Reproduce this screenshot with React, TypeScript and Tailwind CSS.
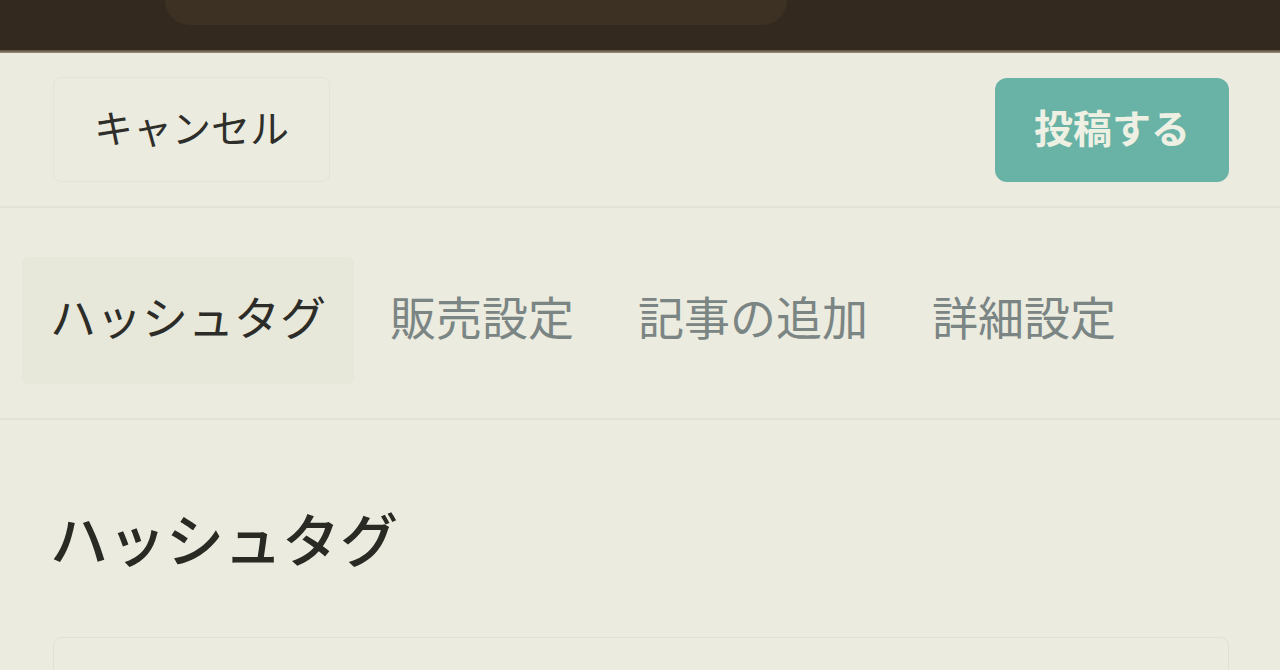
import React from "react";

const font = { fontFamily: '"Noto Sans CJK JP", "Noto Sans", sans-serif' };

export default function App() {
  const tabs = ["ハッシュタグ", "販売設定", "記事の追加", "詳細設定"];
  return (
    <div className="w-[1280px] h-[670px] overflow-hidden bg-[#ebebdf] flex flex-col" style={font}>
      {/* top system bar */}
      <div className="h-[50px] bg-[#34291e] flex shrink-0">
        <div className="ml-[165px] w-[622px] h-[25px] bg-[#3d3124] rounded-b-[28px]" />
      </div>
      <div className="h-[3px] bg-gradient-to-b from-[#5a4a38] to-[#9c9282] shrink-0" />

      {/* header */}
      <div className="h-[155px] shrink-0 flex items-center justify-between pl-[53px] pr-[51px] border-b-2 border-[#e2e2d5]">
        <button className="h-[105px] w-[277px] rounded-lg border border-[#e4e4d8] text-[39px] text-[#2e2e2a] leading-none flex items-center justify-center pb-[7px]">
          キャンセル
        </button>
        <button className="h-[104px] w-[234px] rounded-xl bg-[#68b3a5] text-[39px] font-bold text-[#eef0e3] leading-none flex items-center justify-center pb-[6px]">
          投稿する
        </button>
      </div>

      {/* tabs */}
      <div className="h-[212px] shrink-0 flex items-center pl-[22px] gap-2 border-b-2 border-[#e2e2d5]">
        {tabs.map((t, i) => (
          <div
            key={t}
            className={
              i === 0
                ? "h-[127px] px-7 flex items-center bg-[#e7e7da] rounded-md text-[46px] text-[#2c2c28] leading-none mt-[14px] pb-[10px]"
                : "h-[127px] px-7 flex items-center text-[46px] text-[#7a8584] leading-none mt-[14px] pb-[10px]"
            }
          >
            {t}
          </div>
        ))}
      </div>

      {/* content */}
      <div className="pl-[53px] pr-[51px] pt-[88px]">
        <h2 className="text-[58px] font-medium text-[#2a2a24] leading-none -ml-[3px]">ハッシュタグ</h2>
        <div className="mt-[71px] h-[80px] rounded-lg border border-[#e1e1d3]" />
      </div>
    </div>
  );
}
